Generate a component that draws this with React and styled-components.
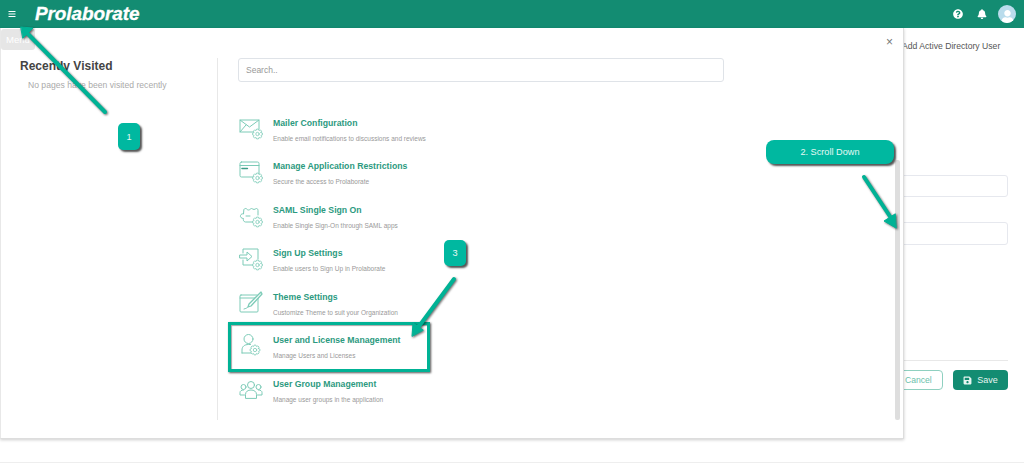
import React from 'react'
import styled, { createGlobalStyle } from 'styled-components'
import { FaBars, FaBell, FaQuestionCircle, FaSave, FaUser } from 'react-icons/fa'

const GlobalStyle = createGlobalStyle`
html, body {
  margin: 0;
  padding: 0;
  background: #fff;
}
body {
  font-family: "Liberation Sans", Arial, sans-serif;
  overflow: hidden;
}
`

const Page = styled.div`
position: relative;
width: 1024px;
height: 463px;
overflow: hidden;
display: flex;
flex-direction: column;
border-bottom: 1px solid #eee;
box-sizing: border-box;
`

const Header = styled.header`
height: 28px;
flex: none;
background: #138c72;
display: flex;
align-items: center;
padding: 0 8px;
color: #fff;
`

const MenuButton = styled(FaBars)`
width: 8px;
height: 8px;
margin-right: 19px;
margin-top: -1px;
`

const Logo = styled.div`
font-size: 19px;
font-weight: bold;
font-style: italic;
letter-spacing: -0.1px;
-webkit-text-stroke: 0.3px #fff;
`

const HeaderIcons = styled.div`
margin-left: auto;
display: flex;
align-items: center;
gap: 14px;
`

const HelpIcon = styled(FaQuestionCircle)`
width: 10px;
height: 10px;
`

const BellIcon = styled(FaBell)`
width: 10px;
height: 10px;
margin-right: -3px;
`

const Avatar = styled.div`
width: 18px;
height: 18px;
border-radius: 50%;
background: #b9dcec;
display: flex;
align-items: flex-end;
justify-content: center;
overflow: hidden;
color: #fff;
`

const Content = styled.main`
flex: 1;
display: flex;
flex-direction: column;
align-items: flex-end;
padding: 13px 16px 0 0;
`

const PageTitle = styled.div`
width: 106px;
font-size: 8.65px;
line-height: 11px;
color: #555;
`

const Field = styled.div`
width: 240px;
height: ${p => p.$h}px;
border: 1px solid #e6e8ee;
border-radius: 3px;
box-sizing: border-box;
margin-top: ${p => p.$top}px;
`

const Actions = styled.div`
width: 240px;
margin-top: 115px;
padding-top: 9px;
border-top: 1px solid #e8e8e8;
display: flex;
justify-content: flex-end;
gap: 10px;
`

const CancelButton = styled.div`
width: 65px;
height: 20px;
border: 1px solid #8fd0c0;
border-radius: 4px;
box-sizing: border-box;
font-size: 8.6px;
line-height: 18px;
color: #6bbfac;
padding-left: 26px;
`

const SaveButton = styled.div`
width: 55px;
height: 20px;
border-radius: 4px;
background: #138c72;
color: #e8f5f1;
font-size: 9px;
display: flex;
align-items: center;
justify-content: center;
gap: 5px;
`

const Modal = styled.section`
position: absolute;
left: 0;
top: 28px;
width: 904px;
height: 411px;
box-sizing: border-box;
background: #fff;
border-right: 1px solid #ddd;
border-bottom: 1px solid #ddd;
border-left: 1px solid #e8e8e8;
box-shadow: 0 1px 3px rgba(0, 0, 0, 0.2);
padding: 30px 0 18px;
display: flex;
`

const RecentColumn = styled.div`
width: 217px;
flex: none;
box-sizing: border-box;
border-right: 1px solid #e8e8e8;
padding-left: 19px;
`

const RecentTitle = styled.h2`
margin: 0;
font-size: 12px;
line-height: 16px;
font-weight: bold;
color: #444;
`

const RecentEmpty = styled.p`
margin: 6px 0 0 8px;
font-size: 8.6px;
line-height: 11px;
color: #aaa;
`

const SettingsColumn = styled.div`
flex: 1;
padding-left: 20px;
`

const Search = styled.div`
width: 486px;
height: 23.5px;
box-sizing: border-box;
border: 1px solid #dfe3e8;
border-radius: 3px;
padding-left: 7px;
font-size: 8.5px;
line-height: 22px;
color: #999;
`

const SettingsList = styled.div`
margin-top: 32px;
display: flex;
flex-direction: column;
`

const SettingsRow = styled.div`
height: 43.5px;
display: flex;
gap: 10px;
padding-left: 1px;
`

const IconBox = styled.svg`
width: 24px;
height: 24px;
flex: none;
margin-top: 3px;
fill: none;
stroke: #7ccbb7;
stroke-width: 1;
stroke-linejoin: round;
stroke-linecap: round;
`

const RowText = styled.div`
display: flex;
flex-direction: column;
`

const RowTitle = styled.div`
font-size: 8.7px;
line-height: 12px;
margin-top: 3px;
font-weight: bold;
color: #2c9a80;
`

const RowDesc = styled.div`
font-size: 6.5px;
line-height: 9px;
margin-top: 5px;
color: #999;
`

const CloseButton = styled.div`
position: absolute;
right: 10px;
top: 7px;
font-size: 12px;
line-height: 14px;
color: #777;
`

const Scrollbar = styled.div`
position: absolute;
right: 3px;
top: 132px;
width: 5px;
height: 260px;
border-radius: 2px;
background: #dedede;
`

const MenuTip = styled.div`
position: absolute;
left: 1px;
top: 29px;
width: 34px;
height: 21px;
border-radius: 3px;
background: #e6e6e6;
color: #fff;
font-size: 9.5px;
line-height: 21px;
text-align: center;
`

const Callout = styled.div`
position: absolute;
left: ${p => p.$x}px;
top: ${p => p.$y}px;
width: ${p => p.$w}px;
height: ${p => p.$h}px;
border-radius: ${p => p.$r || 5}px;
background: #00b8a0;
box-shadow: 2px 2px 2px #555;
color: #e6f8f4;
font-size: 9.2px;
display: flex;
align-items: center;
justify-content: center;
`

const Highlight = styled.div`
position: absolute;
left: 228px;
top: 322px;
width: 202px;
height: 50px;
box-sizing: border-box;
border: 3px solid #00b295;
box-shadow: 1px 1px 2px #555, inset 1px 1px 1px rgba(0, 0, 0, 0.35);
`

const ArrowLayer = styled.svg`
position: absolute;
left: 0;
top: 0;
width: 1024px;
height: 463px;
pointer-events: none;
filter: drop-shadow(1px 1px 1px rgba(0, 0, 0, 0.6));
`

// outline of a toothed cog, built around x,y
const cogPath = (x, y, outer, inner) => {
  const teeth = 8
  let d = ''
  for (let i = 0; i < teeth; i++) {
    const a = (i / teeth) * Math.PI * 2
    const step = Math.PI / teeth
    const pts = [
      [a - step * 0.95, inner],
      [a - step * 0.45, outer],
      [a + step * 0.45, outer],
      [a + step * 0.95, inner],
    ]
    pts.forEach(([ang, r], j) => {
      const px = (x + Math.cos(ang) * r).toFixed(2)
      const py = (y + Math.sin(ang) * r).toFixed(2)
      d += `${i === 0 && j === 0 ? 'M' : 'L'}${px} ${py}`
    })
  }
  return d + 'Z'
}

// small cog that sits on the corner of most of the setting icons
const Cog = ({ x = 19, y = 19 }) => (
  <g strokeWidth="0.8">
    <path d={cogPath(x, y, 5, 3.8)} fill="#fff" />
    <circle cx={x} cy={y} r={1.7} />
  </g>
)

const MailIcon = () => (
  <IconBox viewBox="0 0 24 24">
    <path d="M15 15H1V3h19v9" />
    <path d="M1 3l9.500 7L20 3M1 15l6-7" />
    <Cog x={18.500} y={17} />
  </IconBox>
)

const WindowIcon = () => (
  <IconBox viewBox="0 0 24 24">
    <rect x="1" y="2" width="19" height="15" rx="1.500" />
    <path d="M1 5.500h19" />
    <path d="M3 8.500h6" strokeWidth="1.600" strokeDasharray="1.400 .6" stroke="#3c9d86" />
    <Cog x={18.500} y={18} />
  </IconBox>
)

const PuzzleIcon = () => (
  <IconBox viewBox="0 0 24 24">
    <path d="M14 18H6.500c-2-.2-2.500-2-2-3.500C2.500 14.500 1 13 1.500 11.500 2 10 3.500 9.500 4.500 10L4.800 6c0-1 1-1.500 2-1.500 1 0 1.200 1.500 2.700 1.500s2-1.500 3-1.500 1.500 1 2.500 1 1.500-1 2.500-1 1.500 1 1.500 2v4.500" />
    <path d="M7 12h4" />
    <Cog x={18.500} y={18} />
  </IconBox>
)

const SignUpIcon = () => (
  <IconBox viewBox="0 0 24 24">
    <path d="M4 6V2h15v10M4 13v5h10" />
    <path d="M1 8h7V5l5 4.500-5 4.500v-3H1z" />
    <Cog x={18.500} y={18} />
  </IconBox>
)

const ThemeIcon = () => (
  <IconBox viewBox="0 0 24 24">
    <rect x="1" y="4" width="18" height="17" rx="1" />
    <path d="M1 7h18" />
    <path d="M22 1L10 13l-1 3 3-1L23 3z" strokeWidth="1.300" fill="#fff" />
    <path d="M5 18c2-.5 3-1 4-2" />
  </IconBox>
)

const UserIcon = () => (
  <IconBox viewBox="0 0 24 24">
    <circle cx="9.500" cy="5" r="4.500" />
    <path d="M3 19v-3c0-3.500 2.500-5.500 6.500-5.500h2M3 19h9" />
    <Cog x={16} y={16} />
  </IconBox>
)

const GroupIcon = () => (
  <IconBox viewBox="0 0 24 24">
    <circle cx="12" cy="7" r="3.500" />
    <circle cx="4.500" cy="9" r="2.500" />
    <circle cx="19.500" cy="9" r="2.500" />
    <path d="M6.500 20v-3.500c0-3 2.500-4.500 5.500-4.500s5.500 1.500 5.500 4.500V20zM5.500 17H1v-2.500c0-1.500 1.500-2.500 3.500-2.500M18.500 17H23v-2.500c0-1.500-1.500-2.500-3.500-2.500" />
  </IconBox>
)

const settings = [
  { title: 'Mailer Configuration', desc: 'Enable email notifications to discussions and reviews', Icon: MailIcon },
  { title: 'Manage Application Restrictions', desc: 'Secure the access to Prolaborate', Icon: WindowIcon },
  { title: 'SAML Single Sign On', desc: 'Enable Single Sign-On through SAML apps', Icon: PuzzleIcon },
  { title: 'Sign Up Settings', desc: 'Enable users to Sign Up in Prolaborate', Icon: SignUpIcon },
  { title: 'Theme Settings', desc: 'Customize Theme to suit your Organization', Icon: ThemeIcon },
  { title: 'User and License Management', desc: 'Manage Users and Licenses', Icon: UserIcon },
  { title: 'User Group Management', desc: 'Manage user groups in the application', Icon: GroupIcon },
]

const App = () => {
  return (
    <Page>
      <GlobalStyle />
      <Header>
        <MenuButton />
        <Logo>Prolaborate</Logo>
        <HeaderIcons>
          <HelpIcon />
          <BellIcon />
          <Avatar>
            <FaUser size={13} />
          </Avatar>
        </HeaderIcons>
      </Header>

      <Content>
        <PageTitle>Add Active Directory User</PageTitle>
        <Field $top={123} $h={22} />
        <Field $top={25} $h={23} />
        <Actions>
          <CancelButton>Cancel</CancelButton>
          <SaveButton>
            <FaSave size={9} />
            Save
          </SaveButton>
        </Actions>
      </Content>

      <Modal>
        <CloseButton>×</CloseButton>
        <RecentColumn>
          <RecentTitle>Recently Visited</RecentTitle>
          <RecentEmpty>No pages have been visited recently</RecentEmpty>
        </RecentColumn>
        <SettingsColumn>
          <Search>Search..</Search>
          <SettingsList>
            {settings.map(({ title, desc, Icon }) => (
              <SettingsRow key={title}>
                <Icon />
                <RowText>
                  <RowTitle>{title}</RowTitle>
                  <RowDesc>{desc}</RowDesc>
                </RowText>
              </SettingsRow>
            ))}
          </SettingsList>
        </SettingsColumn>
        <Scrollbar />
      </Modal>

      <MenuTip>Menu</MenuTip>
      <Highlight />

      <ArrowLayer viewBox="0 0 1024 463">
        <g fill="#00b295" stroke="#00b295" strokeWidth="4" strokeLinecap="round">
          <path d="M105 112L27 33" fill="none" />
          <path d="M21 27l12 1-10 10z" strokeWidth="1" />
          <path d="M864 177l29 44" fill="none" />
          <path d="M896 228l-12-7 11-7z" strokeWidth="1" />
          <path d="M454 279l-37 50" fill="none" />
          <path d="M412 336l1-13 10 7z" strokeWidth="1" />
        </g>
      </ArrowLayer>

      <Callout $x={118} $y={123} $w={22} $h={27}>1</Callout>
      <Callout $x={766} $y={140} $w={128} $h={24} $r={8}>2. Scroll Down</Callout>
      <Callout $x={444} $y={240} $w={22} $h={26}>3</Callout>
    </Page>
  )
}

export default App
